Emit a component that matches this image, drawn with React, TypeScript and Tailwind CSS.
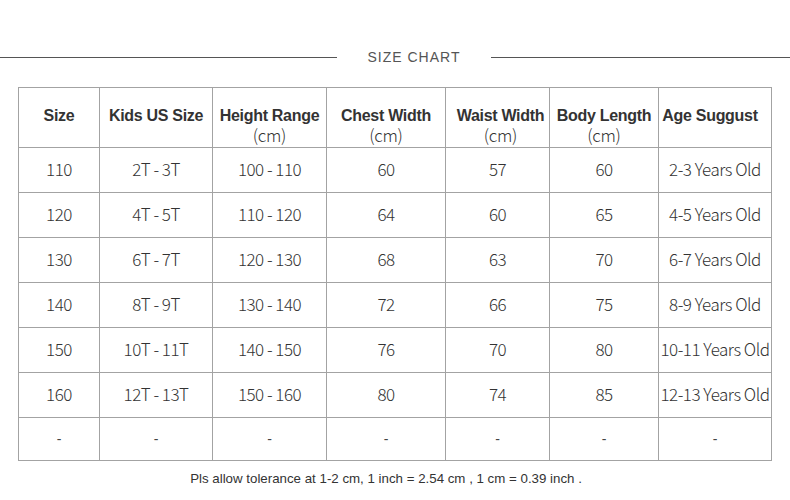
import React from "react";

const cols = [81, 113, 114, 119, 104, 109, 113];

const rows = [
  ["110", "2T - 3T", "100 - 110", "60", "57", "60", "2-3 Years Old"],
  ["120", "4T - 5T", "110 - 120", "64", "60", "65", "4-5 Years Old"],
  ["130", "6T - 7T", "120 - 130", "68", "63", "70", "6-7 Years Old"],
  ["140", "8T - 9T", "130 - 140", "72", "66", "75", "8-9 Years Old"],
  ["150", "10T - 11T", "140 - 150", "76", "70", "80", "10-11 Years Old"],
  ["160", "12T - 13T", "150 - 160", "80", "74", "85", "12-13 Years Old"],
];

const headers: [string, string?][] = [
  ["Size"],
  ["Kids US Size"],
  ["Height Range", "(cm)"],
  ["Chest Width", "(cm)"],
  ["Waist Width", "(cm)"],
  ["Body Length", "(cm)"],
  ["Age Suggust"],
];

export default function App() {
  return (
    <div className="w-[790px] h-[500px] bg-white overflow-hidden">
      {/* title with lines */}
      <div className="flex items-center h-[30px] mt-[42px]">
        <div className="w-[337px] h-px bg-[#555]" />
        <div className="flex-1 text-center text-[14px] tracking-[1px] text-[#555] font-['Liberation_Sans',Arial,sans-serif]">
          SIZE CHART
        </div>
        <div className="w-[299px] h-px bg-[#555]" />
      </div>

      <table className="ml-[18px] mt-[15px] border-collapse table-fixed w-[754px]">
        <colgroup>
          {cols.map((w, i) => (
            <col key={i} style={{ width: w }} />
          ))}
        </colgroup>
        <thead>
          <tr className="h-[60px]">
            {headers.map(([title, unit], i) => (
              <th
                key={i}
                className={`border border-[#a3a3a3] p-0 pt-[18px] text-center align-top font-normal ${
                  i === 6 ? "pr-[10px]" : i === 4 ? "pl-[6px]" : ""
                }`}
              >
                <div className="text-[16px] leading-[19px] font-bold text-[#333] font-['Liberation_Sans',Arial,sans-serif] tracking-[-0.3px] whitespace-nowrap">
                  {title}
                </div>
                {unit && (
                  <div className="text-[17px] leading-[19px] text-[#333] font-['Noto_Sans_CJK_SC',sans-serif] font-light tracking-[-0.3px]">
                    {unit}
                  </div>
                )}
              </th>
            ))}
          </tr>
        </thead>
        <tbody>
          {rows.map((r, ri) => (
            <tr key={ri} className="h-[45px]">
              {r.map((c, ci) => (
                <td
                  key={ci}
                  className="border border-[#a3a3a3] p-0 pb-[3px] text-center align-middle text-[17px] text-[#333] font-['Noto_Sans_CJK_SC',sans-serif] font-light tracking-[-0.5px] whitespace-nowrap"
                >
                  {c}
                </td>
              ))}
            </tr>
          ))}
          <tr className="h-[43px]">
            {cols.map((_, ci) => (
              <td
                key={ci}
                className="border border-[#a3a3a3] p-0 text-center align-middle text-[14px] text-[#444] font-['Liberation_Sans',Arial,sans-serif]"
              >
                -
              </td>
            ))}
          </tr>
        </tbody>
      </table>

      <p className="mt-[8px] text-center text-[13.3px] text-[#333] font-['Liberation_Sans',Arial,sans-serif] pr-[18px]">
        Pls allow tolerance at 1-2 cm, 1 inch = 2.54 cm , 1 cm = 0.39 inch .
      </p>
    </div>
  );
}
